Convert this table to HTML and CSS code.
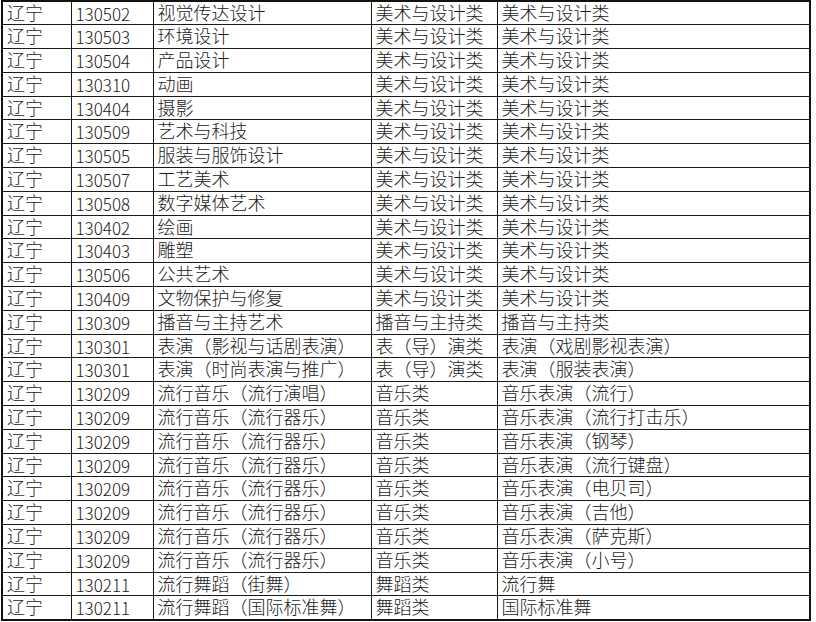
FILE: index.html
```html
<!DOCTYPE html>
<html lang="zh">
<head>
<meta charset="utf-8">
<link rel="stylesheet" href="styles.css">
</head>
<body>
<table class="grid">
<colgroup>
<col class="c1"><col class="c2"><col class="c3"><col class="c4"><col class="c5">
</colgroup>
<tbody>
<tr><td>辽宁</td><td>130502</td><td>视觉传达设计</td><td>美术与设计类</td><td>美术与设计类</td></tr>
<tr><td>辽宁</td><td>130503</td><td>环境设计</td><td>美术与设计类</td><td>美术与设计类</td></tr>
<tr><td>辽宁</td><td>130504</td><td>产品设计</td><td>美术与设计类</td><td>美术与设计类</td></tr>
<tr><td>辽宁</td><td>130310</td><td>动画</td><td>美术与设计类</td><td>美术与设计类</td></tr>
<tr><td>辽宁</td><td>130404</td><td>摄影</td><td>美术与设计类</td><td>美术与设计类</td></tr>
<tr><td>辽宁</td><td>130509</td><td>艺术与科技</td><td>美术与设计类</td><td>美术与设计类</td></tr>
<tr><td>辽宁</td><td>130505</td><td>服装与服饰设计</td><td>美术与设计类</td><td>美术与设计类</td></tr>
<tr><td>辽宁</td><td>130507</td><td>工艺美术</td><td>美术与设计类</td><td>美术与设计类</td></tr>
<tr><td>辽宁</td><td>130508</td><td>数字媒体艺术</td><td>美术与设计类</td><td>美术与设计类</td></tr>
<tr><td>辽宁</td><td>130402</td><td>绘画</td><td>美术与设计类</td><td>美术与设计类</td></tr>
<tr><td>辽宁</td><td>130403</td><td>雕塑</td><td>美术与设计类</td><td>美术与设计类</td></tr>
<tr><td>辽宁</td><td>130506</td><td>公共艺术</td><td>美术与设计类</td><td>美术与设计类</td></tr>
<tr><td>辽宁</td><td>130409</td><td>文物保护与修复</td><td>美术与设计类</td><td>美术与设计类</td></tr>
<tr><td>辽宁</td><td>130309</td><td>播音与主持艺术</td><td>播音与主持类</td><td>播音与主持类</td></tr>
<tr><td>辽宁</td><td>130301</td><td>表演（影视与话剧表演）</td><td>表（导）演类</td><td>表演（戏剧影视表演）</td></tr>
<tr><td>辽宁</td><td>130301</td><td>表演（时尚表演与推广）</td><td>表（导）演类</td><td>表演（服装表演）</td></tr>
<tr><td>辽宁</td><td>130209</td><td>流行音乐（流行演唱）</td><td>音乐类</td><td>音乐表演（流行）</td></tr>
<tr><td>辽宁</td><td>130209</td><td>流行音乐（流行器乐）</td><td>音乐类</td><td>音乐表演（流行打击乐）</td></tr>
<tr><td>辽宁</td><td>130209</td><td>流行音乐（流行器乐）</td><td>音乐类</td><td>音乐表演（钢琴）</td></tr>
<tr><td>辽宁</td><td>130209</td><td>流行音乐（流行器乐）</td><td>音乐类</td><td>音乐表演（流行键盘）</td></tr>
<tr><td>辽宁</td><td>130209</td><td>流行音乐（流行器乐）</td><td>音乐类</td><td>音乐表演（电贝司）</td></tr>
<tr><td>辽宁</td><td>130209</td><td>流行音乐（流行器乐）</td><td>音乐类</td><td>音乐表演（吉他）</td></tr>
<tr><td>辽宁</td><td>130209</td><td>流行音乐（流行器乐）</td><td>音乐类</td><td>音乐表演（萨克斯）</td></tr>
<tr><td>辽宁</td><td>130209</td><td>流行音乐（流行器乐）</td><td>音乐类</td><td>音乐表演（小号）</td></tr>
<tr><td>辽宁</td><td>130211</td><td>流行舞蹈（街舞）</td><td>舞蹈类</td><td>流行舞</td></tr>
<tr><td>辽宁</td><td>130211</td><td>流行舞蹈（国际标准舞）</td><td>舞蹈类</td><td>国际标准舞</td></tr>
</tbody>
</table>
</body>
</html>
```

FILE: styles.css
```css
html, body {
  margin: 0;
  padding: 0;
  background: #ffffff;
}
body {
  padding: 0 0 0 1px;
}
.grid {
  border-collapse: collapse;
  table-layout: fixed;
  width: 810px;
  border: 2px solid #111;
  font-family: "Liberation Sans", "Noto Sans CJK SC", sans-serif;
  font-size: 18px;
  font-weight: 300;
  color: #1a1a1a;
}
.c1 { width: 69px; }
.c2 { width: 82px; }
.c3 { width: 218px; }
.c4 { width: 126px; }
.c5 { width: 313px; }
.grid tr {
  height: 23.8px;
}
.grid td {
  border: 1px solid #1a1a1a;
  padding: 1px 0 0 4px;
  line-height: 20px;
  white-space: nowrap;
  overflow: hidden;
  vertical-align: middle;
}
.grid td:nth-child(2) {
  font-family: "Noto Sans CJK SC", "Liberation Sans", sans-serif;
  font-size: 17px;
  font-weight: 300;
  padding-left: 4px;
}
```
